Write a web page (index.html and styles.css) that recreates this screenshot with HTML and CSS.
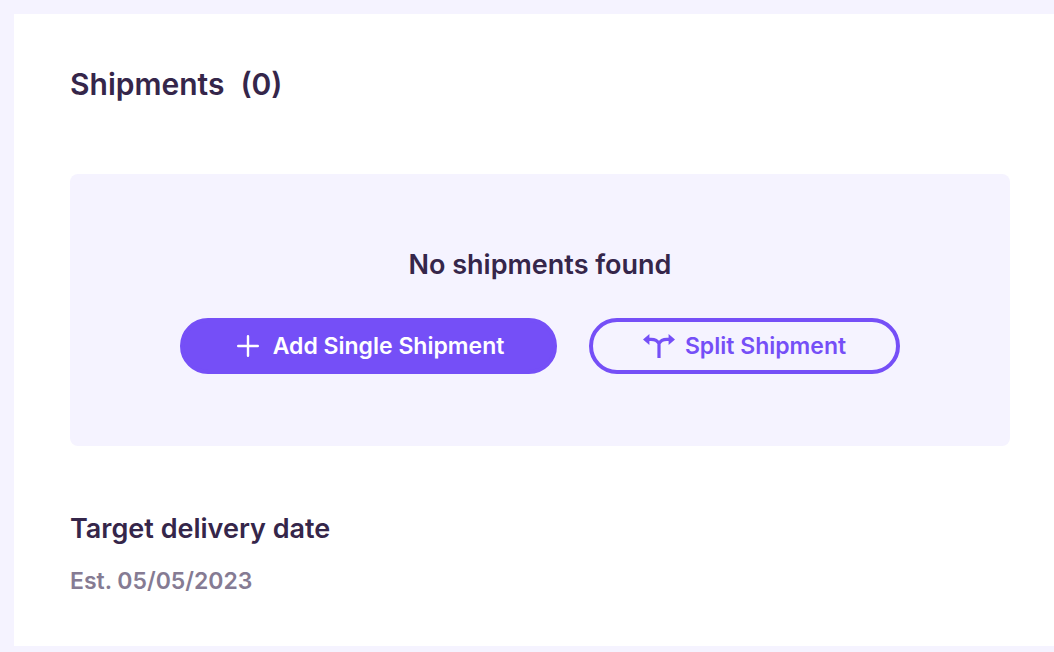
FILE: index.html
```html
<!DOCTYPE html>
<html lang="en">
<head>
<meta charset="utf-8">
<meta name="viewport" content="width=device-width, initial-scale=1">
<title>Shipments</title>
<link rel="stylesheet" href="styles.css">
</head>
<body>
<main class="panel">
  <h1 class="panel-title"><span>Shipments</span><span>(0)</span></h1>
  <section class="empty">
    <h2 class="subtitle">No shipments found</h2>
    <div class="actions">
      <button type="button" class="button button-primary">
        <svg class="icon-plus" width="22" height="22" viewBox="0 0 22 22" aria-hidden="true"><path d="M11 1.2v19.6M1.2 11h19.6"/></svg>
        <span>Add Single Shipment</span>
      </button>
      <button type="button" class="button button-outline">
        <svg class="icon-split" width="32" height="24" viewBox="0 0 32 24" aria-hidden="true"><path class="stroke" d="M5 5.3H8C12 5.3 14.6 6.6 16 9.6M27 5.3H24C20 5.3 17.4 6.6 16 9.6M16 8V24"/><path class="head" d="M0 5.5L6.4 0V11ZM32 5.5L25.6 0V11Z"/></svg>
        <span>Split Shipment</span>
      </button>
    </div>
  </section>
  <section class="delivery">
    <h2 class="subtitle">Target delivery date</h2>
    <p class="estimate">Est. 05/05/2023</p>
  </section>
</main>
</body>
</html>
```
FILE: styles.css
```css
* {
  box-sizing: border-box;
}

body {
  margin: 0;
  padding: 14px 0 6px 14px;
  background: #f5f3ff;
  color: #35264a;
  font-family: Inter, "Open Sans", sans-serif;
  font-weight: 600;
}

h1,
h2,
p {
  margin: 0;
  font-weight: 600;
}

.panel {
  padding: 50px 44px 48px 56px;
  background: #fff;
}

.panel-title {
  display: flex;
  gap: 16px;
  font-size: 30px;
  line-height: 40px;
}

.empty {
  display: flex;
  flex-direction: column;
  align-items: center;
  gap: 34px;
  margin-top: 70px;
  padding: 72px 24px;
  border-radius: 8px;
  background: #f5f3ff;
}

.subtitle {
  font-size: 27px;
  line-height: 38px;
}

.actions {
  display: flex;
  flex-wrap: wrap;
  justify-content: center;
  gap: 32px;
}

.button {
  display: flex;
  align-items: center;
  justify-content: center;
  height: 56px;
  border: 4px solid #754ff7;
  border-radius: 28px;
  font: inherit;
  font-size: 23px;
  line-height: 32px;
  cursor: pointer;
}

.button-primary {
  gap: 14px;
  min-width: 377px;
  padding: 0 48px 0 52px;
  background: #754ff7;
  color: #fff;
}

.button-outline {
  gap: 10px;
  min-width: 311px;
  padding: 0 48px;
  background: transparent;
  color: #754ff7;
}

.icon-plus {
  fill: none;
  stroke: currentColor;
  stroke-width: 2.4;
  stroke-linecap: round;
}

.icon-split .stroke {
  fill: none;
  stroke: currentColor;
  stroke-width: 3.2;
}

.icon-split .head {
  fill: currentColor;
}

.delivery {
  display: grid;
  gap: 16px;
  margin-top: 64px;
}

.estimate {
  color: #857b93;
  font-size: 23px;
  line-height: 34px;
}
```
